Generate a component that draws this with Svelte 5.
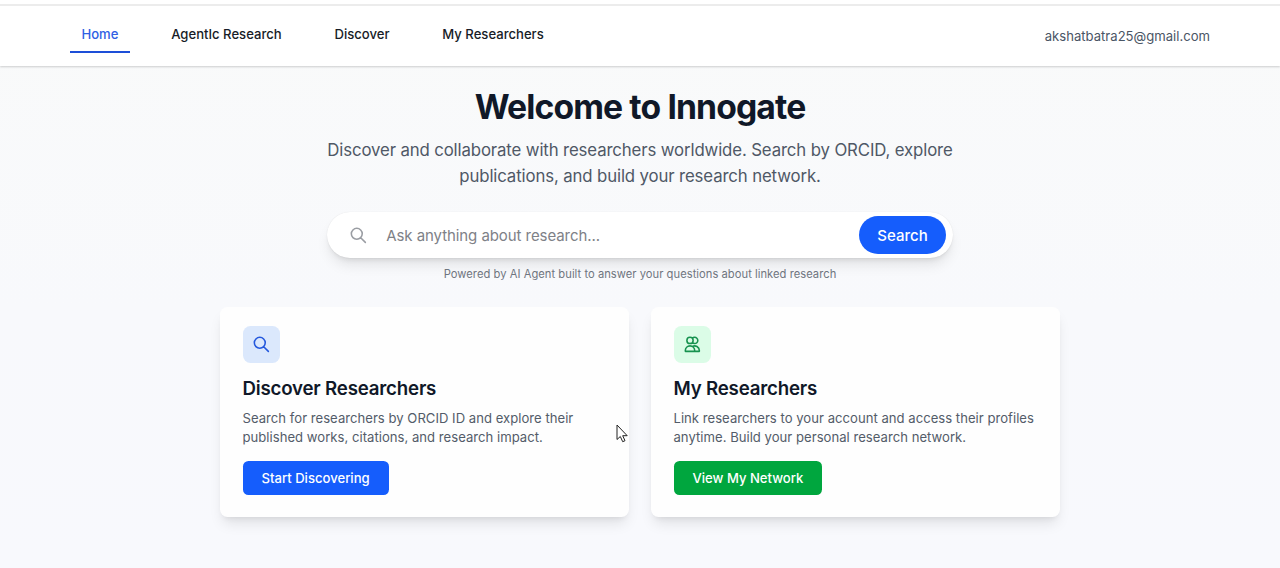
<script lang="ts">
  interface NavItem {
    label: string;
    active?: boolean;
  }

  interface Card {
    title: string;
    lines: string[];
    action: string;
    tone: "blue" | "green";
    icon: string;
  }

  const searchIcon = "M21 21l-6-6m2-5a7 7 0 11-14 0 7 7 0 0114 0z";
  const usersIcon =
    "M12 4.354a4 4 0 110 5.292M15 21H3v-1a6 6 0 0112 0v1zm0 0h6v-1a6 6 0 00-9-5.197M13 7a4 4 0 11-8 0 4 4 0 018 0z";

  const navItems: NavItem[] = [
    { label: "Home", active: true },
    { label: "AgentIc Research" },
    { label: "Discover" },
    { label: "My Researchers" },
  ];

  const cards: Card[] = [
    {
      title: "Discover Researchers",
      lines: [
        "Search for researchers by ORCID ID and explore their",
        "published works, citations, and research impact.",
      ],
      action: "Start Discovering",
      tone: "blue",
      icon: searchIcon,
    },
    {
      title: "My Researchers",
      lines: [
        "Link researchers to your account and access their profiles",
        "anytime. Build your personal research network.",
      ],
      action: "View My Network",
      tone: "green",
      icon: usersIcon,
    },
  ];

  let query = $state("");
</script>

{#snippet icon(path: string)}
  <svg class="icon" viewBox="0 0 24 24" fill="none" stroke="currentColor" stroke-width="2" stroke-linecap="round" stroke-linejoin="round" aria-hidden="true">
    <path d={path} />
  </svg>
{/snippet}

<div class="page">
  <header class="header">
    <nav class="nav">
      {#each navItems as item (item.label)}
        <a href="#top" class="nav-link" class:nav-link--active={item.active}>{item.label}</a>
      {/each}
    </nav>
    <span class="email">akshatbatra25@gmail.com</span>
  </header>

  <main class="main">
    <h1 class="title">Welcome to Innogate</h1>
    <p class="subtitle">
      Discover and collaborate with researchers worldwide. Search by ORCID, explore<br />
      publications, and build your research network.
    </p>

    <form class="search" onsubmit={(event) => event.preventDefault()}>
      <span class="search-icon">{@render icon(searchIcon)}</span>
      <input class="search-input" bind:value={query} placeholder="Ask anything about research..." />
      <button class="search-button">Search</button>
    </form>
    <p class="hint">Powered by AI Agent built to answer your questions about linked research</p>

    <div class="cards">
      {#each cards as card (card.title)}
        <section class="card card--{card.tone}">
          <div class="card-icon">{@render icon(card.icon)}</div>
          <h2 class="card-title">{card.title}</h2>
          <p class="card-text">{card.lines[0]}<br />{card.lines[1]}</p>
          <button class="card-button">{card.action}</button>
        </section>
      {/each}
    </div>
  </main>

  <svg class="cursor" viewBox="0 0 12 19" aria-hidden="true">
    <path d="M1 1v14.5l3.3-3 2.4 5.2 2.3-1-2.3-5h4.5z" fill="#fff" stroke="#222" stroke-width="1" />
  </svg>
</div>

<style>
  .page {
    position: relative;
    box-sizing: border-box;
    height: 568px;
    overflow: hidden;
    font-family: Inter, "Liberation Sans", sans-serif;
    color: #101828;
    background: linear-gradient(to bottom, #f9fafa, #f8f9fc 55%, #f8f9fd);
  }

  h1,
  h2,
  p {
    margin: 0;
  }

  button {
    border: 0;
    font-family: inherit;
    color: #fff;
    cursor: pointer;
  }

  .header {
    display: flex;
    justify-content: space-between;
    box-sizing: border-box;
    height: 66px;
    padding: 0 70px;
    border-top: 1px solid #fff;
    background: #fff;
    box-shadow: 0 1px 2px rgba(0, 0, 0, 0.18);
  }

  .header::before {
    content: "";
    position: absolute;
    top: 4px;
    left: 0;
    width: 100%;
    height: 2px;
    background: #ececec;
  }

  .nav {
    display: flex;
    gap: 30px;
    padding-top: 17px;
  }

  .nav-link {
    box-sizing: border-box;
    height: 35px;
    padding: 7px 11.4px 0;
    border-bottom: 2px solid transparent;
    font-size: 13.1px;
    line-height: 18px;
    font-weight: 500;
    color: #171c27;
    text-decoration: none;
  }

  .nav-link--active {
    color: #2f5fe4;
    border-color: #1d4fd8;
  }

  .email {
    padding-top: 26px;
    font-size: 13.1px;
    line-height: 19px;
    color: #4a5565;
  }

  .main {
    display: flex;
    flex-direction: column;
    align-items: center;
    padding-top: 22px;
  }

  .title {
    font-size: 33.7px;
    line-height: 38px;
    font-weight: 700;
    letter-spacing: -0.88px;
  }

  .subtitle {
    margin-top: 11px;
    font-size: 16.8px;
    line-height: 26px;
    letter-spacing: -0.13px;
    text-align: center;
    color: #4f5866;
  }

  .search {
    display: flex;
    align-items: center;
    box-sizing: border-box;
    width: 626px;
    height: 46px;
    margin-top: 23px;
    padding: 0 7px 0 21.5px;
    border-radius: 23px;
    background: #fff;
    box-shadow:
      0 0 1px rgba(0, 0, 0, 0.12),
      0 9px 14px -3px rgba(0, 0, 0, 0.1),
      0 4px 6px -4px rgba(0, 0, 0, 0.14);
  }

  .icon {
    display: block;
    width: 18.7px;
    height: 18.7px;
  }

  .search-icon {
    color: #9a9da3;
  }

  .search-input {
    flex: 1;
    min-width: 0;
    padding: 0 0 0 19px;
    border: 0;
    outline: none;
    background: none;
    font-family: inherit;
    font-size: 15px;
    letter-spacing: -0.07px;
    color: #101828;
  }

  .search-input::placeholder {
    color: #7e8187;
    opacity: 1;
  }

  .search-button {
    width: 87px;
    height: 38px;
    padding: 0;
    border-radius: 19px;
    background: #155dfc;
    font-size: 15px;
    font-weight: 500;
  }

  .hint {
    margin-top: 8px;
    font-size: 11.2px;
    line-height: 16px;
    letter-spacing: 0.03px;
    color: #6f757f;
  }

  .cards {
    display: grid;
    grid-template-columns: 1fr 1fr;
    gap: 22px;
    width: 840px;
    margin-top: 25px;
  }

  .card {
    display: flex;
    flex-direction: column;
    align-items: flex-start;
    box-sizing: border-box;
    height: 210px;
    padding: 19px 22.5px 0;
    border-radius: 7.5px;
    background: #fefefe;
    box-shadow:
      0 9px 14px -3px rgba(0, 0, 0, 0.1),
      0 4px 6px -4px rgba(0, 0, 0, 0.1);
  }

  .card-icon {
    display: grid;
    place-items: center;
    width: 37.4px;
    height: 37.4px;
    border-radius: 7.5px;
  }

  .card--blue .card-icon {
    background: #dbe8fc;
    color: #2458dd;
  }

  .card--green .card-icon {
    background: #dbfce7;
    color: #17924f;
  }

  .card-title {
    margin-top: 12px;
    font-size: 18.7px;
    line-height: 27px;
    font-weight: 600;
    letter-spacing: -0.2px;
  }

  .card-text {
    margin-top: 7px;
    font-size: 13.1px;
    line-height: 18.7px;
    letter-spacing: 0.02px;
    color: #535c69;
    white-space: nowrap;
  }

  .card-button {
    height: 34px;
    margin-top: 14px;
    padding: 0 19px;
    border-radius: 5.5px;
    font-size: 13.1px;
    font-weight: 500;
  }

  .card--blue .card-button {
    background: #155dfc;
  }

  .card--green .card-button {
    background: #00a63e;
  }

  .cursor {
    position: absolute;
    top: 424px;
    left: 616px;
    width: 12px;
    height: 19px;
  }
</style>
